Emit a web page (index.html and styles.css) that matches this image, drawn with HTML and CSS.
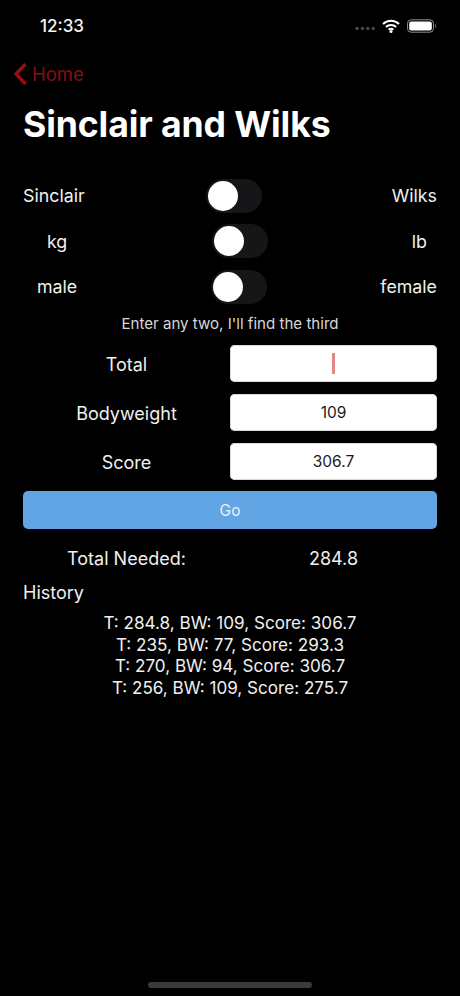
FILE: index.html
```html
<!DOCTYPE html>
<html lang="en">
<head>
<meta charset="utf-8">
<title>Sinclair and Wilks</title>
<link rel="stylesheet" href="styles.css">
</head>
<body>
<div class="screen">
  <header class="status">
    <span class="time">12:33</span>
    <div class="status-icons">
      <svg class="dots" width="20" height="5" viewBox="0 0 20 5"><circle cx="2" cy="2.5" r="1.7"/><circle cx="7.4" cy="2.5" r="1.7"/><circle cx="12.8" cy="2.5" r="1.7"/><circle cx="18.2" cy="2.5" r="1.7"/></svg>
      <svg class="wifi" width="18" height="14" viewBox="0 0 18 14"><path d="M1 5 A11.5 11.5 0 0 1 17 5" /><path d="M3.9 8 A7.4 7.4 0 0 1 14.100 8"/><path d="M6.700 10.800 A3.400 3.400 0 0 1 11.300 10.800"/><circle cx="9" cy="12.400" r="1.500"/></svg>
      <svg class="battery" width="30" height="14" viewBox="0 0 30 14"><rect class="batt-shell" x="0.500" y="0.800" width="26" height="12.400" rx="3.600"/><rect class="batt-fill" x="2.200" y="2.500" width="22.600" height="9" rx="2"/><path class="batt-cap" d="M28 5 C29.200 5.400 29.200 8.600 28 9 Z"/></svg>
    </div>
  </header>
  <nav class="nav">
    <svg class="chevron" width="15" height="24" viewBox="0 0 15 24"><path d="M12.500 2 L3 12 L12.500 22"/></svg>
    <span class="back">Home</span>
  </nav>
  <h1 class="title">Sinclair and Wilks</h1>
  <main class="content">
    <div class="toggle-row row-a">
      <span class="opt">Sinclair</span>
      <span class="switch"><span class="knob"></span></span>
      <span class="opt">Wilks</span>
    </div>
    <div class="toggle-row row-b">
      <span class="opt">kg</span>
      <span class="switch"><span class="knob"></span></span>
      <span class="opt">lb</span>
    </div>
    <div class="toggle-row row-c">
      <span class="opt">male</span>
      <span class="switch"><span class="knob"></span></span>
      <span class="opt">female</span>
    </div>
    <p class="hint">Enter any two, I'll find the third</p>
    <div class="fields">
      <div class="field"><span class="field-label">Total</span><div class="input"><span class="caret"></span></div></div>
      <div class="field"><span class="field-label">Bodyweight</span><div class="input">109</div></div>
      <div class="field"><span class="field-label">Score</span><div class="input">306.7</div></div>
    </div>
    <button class="go" type="button">Go</button>
    <div class="result"><span class="result-label">Total Needed:</span><span class="result-value">284.8</span></div>
    <div class="history-title">History</div>
    <ul class="history">
      <li>T: 284.8, BW: 109, Score: 306.7</li>
      <li>T: 235, BW: 77, Score: 293.3</li>
      <li>T: 270, BW: 94, Score: 306.7</li>
      <li>T: 256, BW: 109, Score: 275.7</li>
    </ul>
  </main>
  <div class="home-indicator"></div>
</div>
</body>
</html>
```
FILE: styles.css
```css
* { box-sizing: border-box; }
html, body { margin: 0; padding: 0; background: #000; }
body { font-family: Inter, "Liberation Sans", sans-serif; color: #fff; }
.screen { position: relative; width: 460px; height: 996px; overflow: hidden; background: #000; }

.status { height: 52px; display: flex; justify-content: space-between; align-items: center; padding: 0 23px 0 40px; }
.time { font-size: 17px; font-weight: 500; color: #f4f4f4; }
.status-icons { display: flex; align-items: center; gap: 7px; }
.dots { fill: #4a4a4a; margin-top: 5px; }
.wifi { fill: #fff; stroke: none; }
.wifi path { fill: none; stroke: #fff; stroke-width: 2.100; }
.wifi circle { fill: #fff; }
.batt-shell { fill: none; stroke: #8e8e8e; stroke-width: 1; }
.batt-fill { fill: #fff; }
.batt-cap { fill: #8e8e8e; }

.nav { height: 32px; margin-top: 6px; display: flex; align-items: center; padding-left: 13px; gap: 4px; }
.chevron { fill: none; stroke: #960f0f; stroke-width: 3.400; }
.back { font-size: 18.500px; color: #8a0e0e; }

.title { margin: 10px 0 0; padding-left: 23px; font-size: 35.600px; line-height: 50px; font-weight: 700; letter-spacing: -0.1px; }

.content { padding: 0 23px; }
.toggle-row { display: flex; align-items: center; justify-content: space-between; height: 35px; font-size: 17.800px; color: #f0f0f0; margin-bottom: 10.500px; }
.row-a { margin-top: 28px; }
.row-a .switch { margin-right: 8px; }
.row-b { padding: 0 10px 0 24px; }
.row-c { padding: 0 0 0 14px; }
.row-c .switch { margin-left: 20px; }
.switch { display: block; width: 56px; height: 34px; border-radius: 17px; background: #161618; padding: 2px; }
.knob { display: block; width: 30px; height: 30px; border-radius: 50%; background: #fff; }

.hint { margin: -1px 0 0; text-align: center; font-size: 15.100px; line-height: 20px; color: #d8d8d8; }

.fields { margin-top: 11px; display: flex; flex-direction: column; gap: 11.500px; }
.field { display: flex; align-items: center; justify-content: space-between; }
.field-label { width: 207px; padding-top: 2px; text-align: center; font-size: 18px; color: #f0f0f0; }
.input { width: 207px; height: 37.500px; border-radius: 5px; background: #fff; box-shadow: inset 0 0 0 1px #d8d8d8; display: flex; align-items: center; justify-content: center; font-size: 15.500px; color: #1a1a1a; }
.caret { display: block; width: 2.500px; height: 21px; background: #e58686; }

.go { display: block; width: 100%; height: 38px; margin-top: 11px; padding: 0; border: 0; border-radius: 5px; background: #62a5e4; color: #e8f1fa; font: 400 15.500px Inter, "Liberation Sans", sans-serif; }

.result { display: flex; margin-top: 18px; font-size: 18px; line-height: 24px; color: #f0f0f0; }
.result-label { width: 207px; text-align: center; }
.result-value { width: 207px; text-align: center; }

.history-title { margin-top: 10px; font-size: 18px; line-height: 24px; color: #f0f0f0; }
.history { list-style: none; margin: 7px 0 0; padding: 0; text-align: center; font-size: 17.100px; line-height: 21.500px; color: #f0f0f0; }

.home-indicator { position: absolute; left: 148px; bottom: 8px; width: 164px; height: 6px; border-radius: 3px; background: #3a3a3a; }
```
